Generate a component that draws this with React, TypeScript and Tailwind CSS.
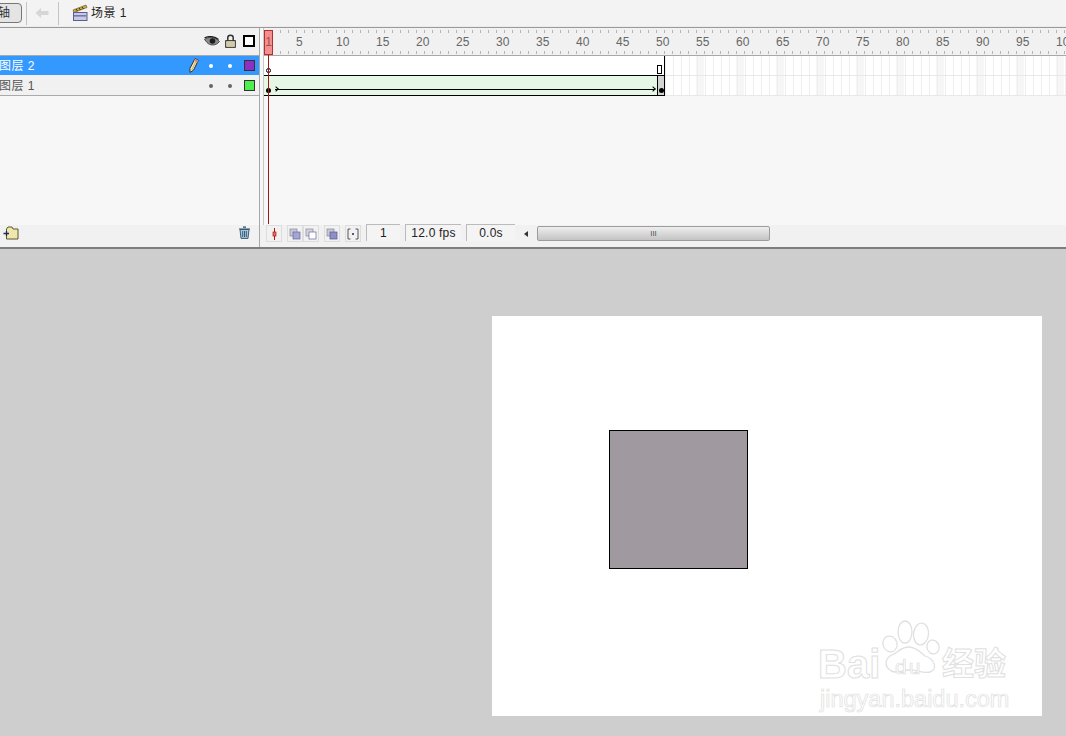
import type { ReactNode } from 'react'

const FONT = "font-['Liberation_Sans','Noto_Sans_CJK_SC',sans-serif]"
const rulerLabels = Array.from({ length: 21 }, (_, i) => (i === 0 ? 1 : i * 5))

function SceneIcon() {
  return (
    <svg width="16" height="18" viewBox="0 0 16 18">
      <path d="M1 6 L14 1 L15 3.5 L2 8.5 Z" fill="#c8b040" stroke="#6b5a20" strokeWidth="0.7" />
      <path d="M4 5 L5.5 7 M7 4 L8.5 6 M10 3 L11.5 5" stroke="#33301c" strokeWidth="1" />
      <rect x="1.5" y="8.5" width="13.5" height="8" fill="#c9c9e6" stroke="#5d5d93" />
      <rect x="2" y="11" width="12.5" height="1.6" fill="#7878ae" />
    </svg>
  )
}

function EyeIcon() {
  return (
    <svg width="16" height="11" viewBox="0 0 16 11">
      <path d="M0.5 3.5 C4 0.5 11 0.5 15.5 5.5 C12 10 6 10 3 6.5 Z" fill="#8a8a8a" stroke="#333" strokeWidth="0.8" />
      <path d="M0.5 2 C5 -0.5 11 0.5 14.5 3.5" stroke="#222" strokeWidth="1.3" fill="none" />
      <circle cx="8.5" cy="5" r="2.8" fill="#1d1d1d" />
    </svg>
  )
}

function LockIcon() {
  return (
    <svg width="11" height="14" viewBox="0 0 11 14">
      <path d="M2.8 7 V3.4 C2.8 0.4 8.2 0.4 8.2 3.4 V7" fill="none" stroke="#333" strokeWidth="1.5" />
      <rect x="0.7" y="6.7" width="9.6" height="6.6" fill="#f3eccb" stroke="#222" />
      <path d="M2 9 H9 M2 11 H9" stroke="#a59a68" strokeWidth="0.8" />
    </svg>
  )
}

function PencilIcon() {
  return (
    <svg width="10" height="15" viewBox="0 0 10 15">
      <path d="M6 0.7 L9.4 2.2 L4.5 12.2 L1 14.4 L0.9 10.4 Z" fill="#f5e8b8" stroke="#222" strokeWidth="0.9" />
      <path d="M6 0.7 L9.4 2.2 L8.3 4.6 L4.9 3 Z" fill="#d88a6c" />
      <path d="M6.6 4 L2.8 11.8" stroke="#c9a860" strokeWidth="0.9" />
    </svg>
  )
}

function FolderIcon() {
  return (
    <svg width="16" height="14" viewBox="0 0 16 14">
      <path d="M3.5 3 L5 1 H9 L10 3 H15 V13 H3.5 Z" fill="#f1e7ac" stroke="#4a4520" strokeWidth="0.9" />
      <path d="M0.5 7.5 H6 M3.5 5 V10" stroke="#1b2a55" strokeWidth="1.3" />
    </svg>
  )
}

function TrashIcon() {
  return (
    <svg width="13" height="13" viewBox="0 0 13 13">
      <path d="M5 1.2 H8 M1 3 H12" stroke="#2e4d68" strokeWidth="1.2" />
      <path d="M2 3.5 H11 L10 12.4 H3 Z" fill="#a5c8e0" stroke="#2e4d68" strokeWidth="0.9" />
      <path d="M4.7 5 V11 M6.5 5 V11 M8.3 5 V11" stroke="#20405a" strokeWidth="0.8" />
    </svg>
  )
}

function OnionButton({ children }: { children: ReactNode }) {
  return <div className="w-4 h-[17px] border border-[#dddddd] flex items-center justify-center">{children}</div>
}

function LayerRow({ name, active, color, pencil }: { name: string; active?: boolean; color: string; pencil?: boolean }) {
  const dot = active ? 'bg-white' : 'bg-[#666666]'
  return (
    <div className={`h-5 flex items-center pr-[4px] text-[12px] border-b ${active ? 'bg-[#3399ff] text-white border-[#f1f1f1]' : 'bg-[#f1f1f1] text-[#555555] border-[#aaaaaa]'}`}>
      <span className="ml-[-1px] flex-1 tracking-[0.5px]">{name}</span>
      <div className="w-[10px] flex justify-center mr-[10px]">{pencil && <PencilIcon />}</div>
      <span className={`w-1 h-1 rounded-full ${dot}`} />
      <span className="w-[15px]" />
      <span className={`w-1 h-1 rounded-full ${dot}`} />
      <span className="w-3" />
      <span className={`w-[11px] h-[11px] border border-[#333333] ${color}`} />
    </div>
  )
}

function Readout({ width, children }: { width: string; children: ReactNode }) {
  return <div className={`h-[17px] border-l border-t border-[#bbbbbb] bg-[#f4f4f4] text-center text-[12px] leading-[17px] tracking-[0.2px] text-[#222222] ${width}`}>{children}</div>
}

export default function App() {
  return (
    <div className={`w-[1066px] h-[736px] overflow-hidden flex flex-col bg-[#cecece] ${FONT}`}>
      {/* top bar */}
      <div className="h-[27px] shrink-0 flex items-center bg-[#f3f3f3] border-b border-[#ececec]">
        <div className="w-[36px] h-[20px] ml-[-14px] shrink-0 border border-[#777777] rounded-[4px] bg-[#e4e4e4] text-[12px] leading-[18px] text-right pr-[11px] text-[#333333]">轴</div>
        <div className="w-px h-[23px] bg-[#c4c4c4] ml-[4px]" />
        <svg width="14" height="12" viewBox="0 0 14 12" className="ml-[8px]">
          <path d="M0.5 6 L6 1 V4 H13.5 V8 H6 V11 Z" fill="#d6d6d6" />
        </svg>
        <div className="w-px h-[23px] bg-[#c4c4c4] ml-[9px]" />
        <div className="ml-[13px]"><SceneIcon /></div>
        <span className="ml-[3px] text-[12px] tracking-[0.5px] text-[#222222]">场景 1</span>
      </div>

      {/* timeline */}
      <div className="h-[222px] shrink-0 flex flex-col bg-[#f7f7f7] border-t border-[#9a9a9a] border-b-2 border-b-[#7d7d7d] relative">
        <div className="flex flex-1 min-h-0">
          <div className="w-[260px] shrink-0 flex flex-col border-r border-[#a8a8a8]">
            <div className="h-[28px] flex items-center justify-end pr-[4px] pb-[1px] bg-[#f1f1f1] border-b border-[#a8a8a8]">
              <EyeIcon />
              <span className="w-[5px]" />
              <LockIcon />
              <span className="w-[7px]" />
              <span className="w-3 h-3 border-2 border-black bg-white" />
            </div>
            <LayerRow name="图层 2" active color="bg-[#8d2fc4]" pencil />
            <LayerRow name="图层 1" color="bg-[#4df04d]" />
            <div className="flex-1 bg-[#f7f7f7]" />
          </div>
          <div className="flex-1 min-w-0 flex flex-col ml-[3px] border-l border-[#c8c8c8]">
            {/* ruler */}
            <div className="h-[28px] flex bg-[#f1f1f1] border-b border-[#a8a8a8] relative overflow-hidden">
              <div className="absolute left-0 right-0 top-[2px] h-[3px] bg-[repeating-linear-gradient(90deg,#b4b4b4_0,#b4b4b4_1px,transparent_1px,transparent_8px)]" />
              <div className="absolute left-0 right-0 bottom-[1px] h-[3px] bg-[repeating-linear-gradient(90deg,#b4b4b4_0,#b4b4b4_1px,transparent_1px,transparent_8px)]" />
              {rulerLabels.map((n) => (
                <span key={n} className={`shrink-0 text-[12px] leading-[29px] text-[#666666] ${n === 1 ? 'w-[32px]' : 'w-[40px]'}`}>
                  {n === 1 ? '' : n}
                </span>
              ))}
            </div>
            {/* frames */}
            <div className="h-5 flex bg-white">
              <div className="w-[401px] relative border-r border-b border-black">
                <span className="absolute left-[2px] top-[12px] w-[5px] h-[5px] rounded-full border border-black bg-white" />
                <span className="absolute right-[2px] top-[9px] w-[5px] h-[9px] border border-black bg-white" />
              </div>
              <div className="flex-1 border-b border-[#e8e8e8] bg-[repeating-linear-gradient(90deg,#eeeeee_0,#eeeeee_1px,transparent_1px,transparent_8px),repeating-linear-gradient(90deg,transparent_0,transparent_31px,#f6f6f6_31px,#f6f6f6_39px,transparent_39px,transparent_40px)]" />
            </div>
            <div className="h-5 flex bg-white">
              <div className="w-[393px] relative bg-[#e6f7e6] border-b border-black">
                <span className="absolute left-[2px] top-[12px] w-[5px] h-[5px] rounded-full bg-black" />
                <span className="absolute left-[10px] top-[11px] w-[4px] h-[4px] border-t border-r border-black rotate-45" />
                <div className="absolute left-[11px] right-[2px] top-[13px] h-px bg-black" />
                <span className="absolute right-[2px] top-[11px] w-[4px] h-[4px] border-t border-r border-black rotate-45" />
              </div>
              <div className="w-[8px] relative bg-[#d4d4d4] border-l border-r border-b border-black">
                <span className="absolute left-px top-[12px] w-[5px] h-[5px] rounded-full bg-black" />
              </div>
              <div className="flex-1 border-b border-[#e8e8e8] bg-[repeating-linear-gradient(90deg,#eeeeee_0,#eeeeee_1px,transparent_1px,transparent_8px),repeating-linear-gradient(90deg,transparent_0,transparent_31px,#f6f6f6_31px,#f6f6f6_39px,transparent_39px,transparent_40px)]" />
            </div>
            <div className="flex-1" />
          </div>
        </div>

        {/* bottom strip */}
        <div className="h-[22px] shrink-0 flex items-start bg-[#f1f1f1]">
          <div className="w-[260px] shrink-0 flex items-start justify-between pl-[3px] pr-[8px] pt-[1px] border-r border-[#a8a8a8] self-stretch">
            <FolderIcon />
            <TrashIcon />
          </div>
          <div className="flex items-start ml-[6px]">
            <OnionButton>
              <svg width="7" height="12" viewBox="0 0 7 12">
                <path d="M3.5 0 V12" stroke="#b01818" />
                <rect x="2" y="4" width="3" height="4" fill="#e86a6a" stroke="#b01818" strokeWidth="0.7" />
              </svg>
            </OnionButton>
            <span className="w-[5px]" />
            <OnionButton>
              <svg width="12" height="12" viewBox="0 0 12 12">
                <rect x="1" y="1" width="7" height="7" fill="#c7c7dd" stroke="#888" strokeWidth="0.7" />
                <rect x="4" y="4" width="7" height="7" fill="#a5a5d4" stroke="#6666a0" strokeWidth="0.7" />
              </svg>
            </OnionButton>
            <OnionButton>
              <svg width="12" height="12" viewBox="0 0 12 12">
                <rect x="1" y="1" width="7" height="7" fill="#d4d4e6" stroke="#888" strokeWidth="0.7" />
                <rect x="4" y="4" width="7" height="7" fill="#ffffff" stroke="#6666a0" strokeWidth="0.7" />
              </svg>
            </OnionButton>
            <span className="w-[5px]" />
            <OnionButton>
              <svg width="12" height="12" viewBox="0 0 12 12">
                <rect x="1" y="1" width="7" height="7" fill="#c7c7dd" stroke="#888" strokeWidth="0.7" />
                <rect x="4" y="4" width="7" height="7" fill="#8f8fc7" stroke="#55558f" strokeWidth="0.7" />
              </svg>
            </OnionButton>
            <span className="w-[5px]" />
            <OnionButton>
              <svg width="12" height="12" viewBox="0 0 12 12">
                <path d="M3.5 1 H1 V11 H3.5 M8.5 1 H11 V11 H8.5" fill="none" stroke="#555" />
                <rect x="5" y="5" width="2" height="2" fill="#55558f" />
              </svg>
            </OnionButton>
            <span className="w-[5px]" />
            <div className="flex items-start mt-[-1px]">
              <Readout width="w-[34px]">1</Readout>
              <span className="w-[5px]" />
              <Readout width="w-[56px]">12.0 fps</Readout>
              <span className="w-[5px]" />
              <Readout width="w-[49px]">0.0s</Readout>
            </div>
            <span className="w-[9px]" />
            <span className="w-0 h-0 mt-[6px] border-y-[3px] border-y-transparent border-r-[4px] border-r-[#333333]" />
            <span className="w-[9px]" />
            <div className="w-[233px] h-[15px] mt-px rounded-[2px] border border-[#9c9c9c] bg-gradient-to-b from-[#eeeeee] to-[#c4c4c4] flex items-center justify-center text-[8px] leading-none text-[#555555]">
              III
            </div>
          </div>
        </div>

        {/* playhead */}
        <div className="absolute left-[264px] top-[2px] w-[9px] h-[25px] bg-[#f58f8f] border border-[#b03030] text-[12px] leading-[23px] text-[#a05050] text-center">1</div>
        <div className="absolute left-[268px] top-[27px] bottom-[23px] w-px bg-[#a01818]" />
      </div>

      {/* stage */}
      <div className="flex-1 min-h-0 pl-[492px] pt-[67px] relative">
        <div className="w-[550px] h-[400px] bg-white pl-[117px] pt-[114px]">
          <div className="w-[139px] h-[139px] bg-[#a09aa0] border border-black" />
        </div>
        <div className="absolute left-[818px] top-[371px] w-[195px] h-[94px] text-white">
          <svg width="58" height="56" viewBox="0 0 58 56" className="absolute left-[64px] top-0" fill="#ffffff" stroke="#e0e0e0" strokeWidth="1.3">
            <ellipse cx="8" cy="24" rx="7" ry="8" transform="rotate(-20 8 24)" />
            <ellipse cx="23" cy="12" rx="7" ry="11" />
            <ellipse cx="39" cy="14" rx="7.5" ry="11" transform="rotate(6 39 14)" />
            <ellipse cx="51" cy="27" rx="6" ry="7" transform="rotate(-15 51 27)" />
            <path d="M8 50 C2 46 3 38 10 35 C16 33 18 27 27 27 C34 27 38 32 43 36 C53 39 56 50 48 52 C40 54 34 49 26 50 C18 51 12 54 8 50 Z" />
          </svg>
          <div className="absolute left-0 top-[26px] h-[36px] flex items-center">
            <span className="w-[77px] text-[40px] font-bold leading-none [-webkit-text-stroke:1px_#e0e0e0]">Bai</span>
            <span className="w-[47px] text-[21px] tracking-[2px] leading-none mt-[5px] text-[#ffffff] [-webkit-text-stroke:0.7px_#dcdcdc]">du</span>
            <span className="text-[32px] font-bold leading-none whitespace-nowrap [-webkit-text-stroke:1px_#e0e0e0]">经验</span>
          </div>
          <div className="absolute left-[2px] top-[68px] text-[23.5px] leading-none whitespace-nowrap [-webkit-text-stroke:0.7px_#e0e0e0]">jingyan.baidu.com</div>
        </div>
      </div>
    </div>
  )
}
